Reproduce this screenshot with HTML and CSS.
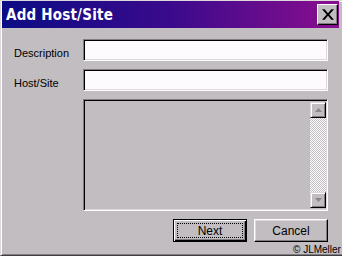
FILE: index.html
```html
<html>
<head>
<meta charset="utf-8">
<title>Add Host/Site</title>
<link rel="stylesheet" href="styles.css">
</head>
<body>

<div class="window">
  <div class="titlebar">
    <span class="title">Add Host/Site</span>
    <button class="close-btn" type="button">
      <svg width="9" height="8" viewBox="0 0 9 8"><path d="M0 0h2l2.5 3 2.5-3h2l-3.5 4 3.5 4h-2l-2.5-3-2.5 3h-2l3.5-4z" fill="#000"/></svg>
    </button>
  </div>

  <form class="dialog-body">
    <label class="field-label">Description</label>
    <input class="text-input" type="text">

    <label class="field-label">Host/Site</label>
    <input class="text-input" type="text">

    <div class="list-box">
      <div class="scrollbar">
        <div class="scroll-btn">
          <svg width="7" height="4" viewBox="0 0 7 4"><path d="M3.5 0l3.5 4h-7z" fill="#8a868a"/></svg>
        </div>
        <div class="scroll-track"></div>
        <div class="scroll-btn">
          <svg width="7" height="4" viewBox="0 0 7 4"><path d="M0 0h7l-3.5 4z" fill="#8a868a"/></svg>
        </div>
      </div>
    </div>

    <div class="buttons">
      <button class="push-btn is-default" type="button"><span class="focus-ring">Next</span></button>
      <button class="push-btn" type="button"><span class="focus-ring">Cancel</span></button>
    </div>
  </form>

  <span class="credit">&copy; JLMeller</span>
</div>

</body>
</html>
```

FILE: styles.css
```css
* {
  margin: 0;
  padding: 0;
  box-sizing: border-box;
}

body {
  width: 342px;
  height: 256px;
  overflow: hidden;
  background-color: #c1bdc1;
  font-family: "Liberation Sans", Arial, sans-serif;
  font-size: 11px;
}

.window {
  position: relative;
  width: 342px;
  height: 256px;
  padding: 1px 3px 2px 1px;
  border-left: 1px solid #dcd8dc;
  border-top: 1px solid #dcd8dc;
  border-bottom: 1px solid #404040;
  box-shadow: inset 1px 1px #fff, inset 0 -1px #807c80;
}

.titlebar {
  display: flex;
  align-items: center;
  height: 27px;
  margin-top: -1px;
  padding: 0 1px 0 4px;
  background: linear-gradient(to right, #0c0c84 0%, #3a0a8c 50%, #8a0e8e 100%);
}

.title {
  color: #fff;
  font-family: "DejaVu Sans Condensed", "DejaVu Sans", sans-serif;
  font-weight: bold;
  font-size: 15px;
  letter-spacing: 0.2px;
}

.close-btn {
  display: flex;
  align-items: center;
  justify-content: center;
  width: 21px;
  height: 21px;
  margin-left: auto;
  background-color: #c1bdc1;
  border: 1px solid;
  border-color: #fff #000 #000 #fff;
  box-shadow: inset -1px -1px #807c80;
}

.close-btn svg {
  width: 12px;
  height: 11px;
}

.dialog-body {
  display: grid;
  grid-template-columns: 69px 245px;
  grid-template-rows: 22px 22px 112px 23px;
  row-gap: 8px;
  padding: 11px 0 0 12px;
}

.field-label {
  align-self: start;
  padding-top: 8px;
  line-height: 13px;
  color: #000;
}

.text-input {
  width: 100%;
  height: 100%;
  background-color: #fdfbfd;
  border: 1px solid;
  border-color: #807c80 #fff #fff #807c80;
  box-shadow: inset 1px 1px #000, inset -1px -1px #dcd8dc;
  outline: none;
}

.list-box {
  grid-column: 2;
  display: flex;
  justify-content: flex-end;
  padding: 2px 1px 2px 2px;
  border: 1px solid;
  border-color: #807c80 #fff #fff #807c80;
  box-shadow: inset 1px 1px #000, inset -1px -1px #dcd8dc;
}

.scrollbar {
  display: flex;
  flex-direction: column;
  width: 16px;
}

.scroll-btn {
  display: flex;
  align-items: center;
  justify-content: center;
  height: 16px;
  background-color: #c1bdc1;
  border: 1px solid;
  border-color: #dcd8dc #000 #000 #dcd8dc;
  box-shadow: inset 1px 1px #fff, inset -1px -1px #807c80;
}

.scroll-track {
  flex: 1;
  background: repeating-conic-gradient(#fff 0 25%, #c1bdc1 0 50%) 0 0 / 2px 2px;
}

.buttons {
  grid-column: 2;
  display: flex;
  justify-content: flex-end;
  gap: 7px;
  margin-left: -1px;
}

.push-btn {
  width: 74px;
  height: 23px;
  padding: 3px;
  font-family: "Liberation Sans", Arial, sans-serif;
  font-size: 12px;
  color: #000;
  background-color: #c1bdc1;
  border: 1px solid;
  border-color: #fff #000 #000 #fff;
  box-shadow: inset -1px -1px #807c80, inset 1px 1px #dcd8dc;
}

.push-btn.is-default {
  border: 1px solid #000;
  box-shadow: inset 1px 1px #fff, inset -1px -1px #000, inset -2px -2px #807c80;
}

.focus-ring {
  display: flex;
  align-items: center;
  justify-content: center;
  height: 100%;
  border: 1px dotted transparent;
}

.is-default .focus-ring {
  border-color: #000;
}

.credit {
  position: absolute;
  left: 292px;
  bottom: 0;
  font-size: 10px;
  line-height: 11px;
  white-space: nowrap;
  color: #000;
}
```
